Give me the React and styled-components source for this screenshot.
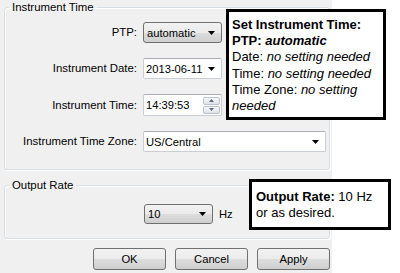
import React from "react";
import styled, { createGlobalStyle } from "styled-components";

const Global = createGlobalStyle`
  html, body { margin: 0; padding: 0; background: #ffffff; }
  body { font-family: "Liberation Sans", Arial, sans-serif; }
  * { box-sizing: border-box; }
`;

const Stage = styled.div`
  position: relative;
  width: 400px;
  height: 273px;
  background: #ffffff;
  overflow: hidden;
`;

const Panel = styled.div`
  width: 332px;
  height: 273px;
  background: #f0f0f0;
  padding: 0 2px 0 4px;
  display: flex;
  flex-direction: column;
  font-size: 11px;
  color: #000;
`;

const Group = styled.fieldset`
  margin: ${(p) => p.$top || 0}px 0 0 0;
  padding: ${(p) => p.$pad};
  border: 1px solid #d5dfe5;
  border-radius: 3px;
  min-width: 0;
  box-shadow: inset 1px 1px 0 #ffffff, 1px 1px 0 #ffffff;
`;

const Legend = styled.legend`
  padding: 0 3px;
  margin: 0;
  font-size: 11.4px;
  line-height: 14px;
  color: #000;
`;

const FormGrid = styled.div`
  display: grid;
  grid-template-columns: 128px 1fr;
  column-gap: 6px;
  row-gap: 15px;
  align-items: center;
`;

const Label = styled.label`
  text-align: right;
  white-space: nowrap;
  font-size: 11.4px;
  line-height: 21px;
`;

const Arrow = () => (
  <svg width="7" height="4" viewBox="0 0 7 4" style={{ display: "block" }}>
    <polygon points="0,0 7,0 3.5,4" fill="#000" />
  </svg>
);

const ButtonSelect = styled.div`
  width: ${(p) => p.$w}px;
  height: ${(p) => p.$h || 21}px;
  border: 1px solid #707070;
  border-radius: 3px;
  background: linear-gradient(#f2f2f2 0%, #ebebeb 50%, #dddddd 51%, #cfcfcf 100%);
  display: flex;
  align-items: center;
  justify-content: space-between;
  padding: 0 6px 0 3px;
  font-size: 11.2px;
`;

const FieldBox = styled.div`
  width: ${(p) => (p.$w ? `${p.$w}px` : "auto")};
  height: ${(p) => p.$h || 21}px;
  background: #ffffff;
  border: 1px solid #c9ced4;
  border-top-color: #abadb3;
  border-radius: 2px;
  display: flex;
  align-items: center;
  justify-content: space-between;
  padding: 0 ${(p) => p.$pr ?? 6}px 0 2px;
  font-size: 11.2px;
`;

const Spinner = styled.div`
  display: flex;
  flex-direction: column;
  gap: 1px;
`;

const SpinBtn = styled.div`
  width: 17px;
  height: 8px;
  border: 1px solid #b8c2cc;
  border-radius: 2px;
  background: linear-gradient(#f7f8fa, #dfe3e8);
  display: flex;
  align-items: center;
  justify-content: center;
`;

const SpinArrow = ({ up }) => (
  <svg width="5" height="3" viewBox="0 0 5 3" style={{ display: "block" }}>
    <polygon points={up ? "0,3 5,3 2.5,0" : "0,0 5,0 2.5,3"} fill="#5a6b80" />
  </svg>
);

const RateRow = styled.div`
  display: flex;
  align-items: center;
  gap: 6px;
  padding-left: 135px;
`;

const Unit = styled.span`
  font-size: 11.2px;
`;

const ButtonRow = styled.div`
  display: flex;
  justify-content: flex-end;
  gap: 9px;
  margin-top: 9px;
`;

const Button = styled.button`
  width: 73px;
  height: 22px;
  border: 1px solid #707070;
  border-radius: 3px;
  background: linear-gradient(#f2f2f2 0%, #ebebeb 50%, #dddddd 51%, #cfcfcf 100%);
  font-family: "Liberation Sans", Arial, sans-serif;
  font-size: 11.2px;
  color: #000;
  padding: 0;
`;

const Callout = styled.div`
  position: absolute;
  left: ${(p) => p.$x}px;
  top: ${(p) => p.$y}px;
  width: ${(p) => p.$w}px;
  background: #ffffff;
  border: 3px solid #000;
  padding: ${(p) => p.$pad};
  font-family: "Liberation Sans", Arial, sans-serif;
  font-size: 13px;
  line-height: 16.2px;
  color: #000;
`;

const B = styled.b`
  font-weight: bold;
`;

const I = styled.i`
  font-style: italic;
`;

export default function App() {
  return (
    <>
      <Global />
      <Stage>
        <Panel>
          <Group $pad="8px 3px 17px 4px">
            <Legend>Instrument Time</Legend>
            <FormGrid>
              <Label>PTP:</Label>
              <ButtonSelect $w={79}>
                <span>automatic</span>
                <Arrow />
              </ButtonSelect>
              <Label>Instrument Date:</Label>
              <FieldBox $w={79}>
                <span>2013-06-11</span>
                <Arrow />
              </FieldBox>
              <Label>Instrument Time:</Label>
              <FieldBox $w={79} $h={22} $pr={1}>
                <span>14:39:53</span>
                <Spinner>
                  <SpinBtn>
                    <SpinArrow up />
                  </SpinBtn>
                  <SpinBtn>
                    <SpinArrow />
                  </SpinBtn>
                </Spinner>
              </FieldBox>
              <Label>Instrument Time Zone:</Label>
              <FieldBox>
                <span>US/Central</span>
                <Arrow />
              </FieldBox>
            </FormGrid>
          </Group>
          <Group $top={8} $pad="12px 3px 14px 4px">
            <Legend>Output Rate</Legend>
            <RateRow>
              <ButtonSelect $w={69} $h={20}>
                <span>10</span>
                <Arrow />
              </ButtonSelect>
              <Unit>Hz</Unit>
            </RateRow>
          </Group>
          <ButtonRow>
            <Button>OK</Button>
            <Button>Cancel</Button>
            <Button>Apply</Button>
          </ButtonRow>
        </Panel>
        <Callout $x={226} $y={9} $w={160} $pad="5px 3px 3px 3px">
          <B>Set Instrument Time:</B>
          <br />
          <B>
            PTP: <I>automatic</I>
          </B>
          <br />
          Date: <I>no setting needed</I>
          <br />
          Time: <I>no setting needed</I>
          <br />
          Time Zone: <I>no setting</I>
          <br />
          <I>needed</I>
        </Callout>
        <Callout $x={249} $y={179} $w={142} $pad="7px 4px 6px 4px">
          <B>Output Rate:</B> 10 Hz
          <br />
          or as desired.
        </Callout>
      </Stage>
    </>
  );
}
